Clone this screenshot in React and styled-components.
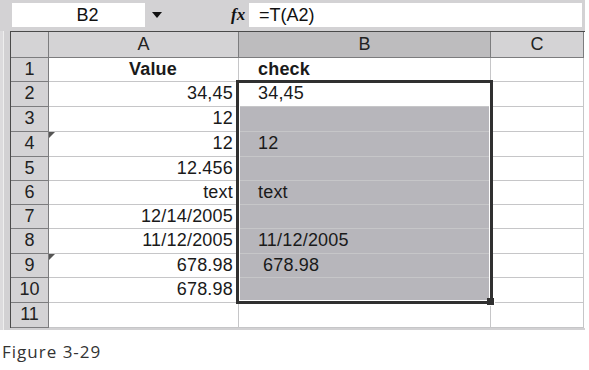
import React from "react";
import styled, { createGlobalStyle } from "styled-components";

const Global = createGlobalStyle`
  html, body { margin: 0; padding: 0; background: #ffffff; }
  body { font-family: "Liberation Sans", Arial, sans-serif; }
`;

const Page = styled.div`
  width: 589px;
  height: 370px;
  position: relative;
  overflow: hidden;
`;

const Window = styled.div`
  width: 585px;
  height: 330px;
  background: #d2d1d3;
  display: flex;
  flex-direction: column;
`;

const Toolbar = styled.div`
  height: 31px;
  box-sizing: border-box;
  padding: 3px 3px 4px 12px;
  display: flex;
  align-items: stretch;
  background: #d3d2d4;
`;

const NameBox = styled.div`
  width: 133px;
  background: #fff;
  font-size: 18px;
  color: #111;
  display: flex;
  align-items: center;
  justify-content: center;
  padding-left: 18px;
  box-sizing: border-box;
`;

const Drop = styled.div`
  width: 86px;
  display: flex;
  align-items: center;
  padding-left: 7px;
  box-sizing: border-box;
`;

const Fx = styled.div`
  width: 18px;
  font-family: "Liberation Serif", serif;
  font-style: italic;
  font-weight: bold;
  font-size: 17px;
  color: #111;
  display: flex;
  align-items: center;
`;

const Formula = styled.div`
  flex: 1;
  background: #fff;
  font-size: 18px;
  color: #111;
  display: flex;
  align-items: center;
  padding-left: 10px;
`;

const Body = styled.div`
  display: flex;
  flex: 1;
`;

const LeftStrip = styled.div`
  width: 10px;
  background: linear-gradient(to right, #dcdbdd 0 3px, #eeeeee 3px 4px, #d2d1d3 4px);
`;

const SheetWrap = styled.div`
  position: relative;
  width: 574px;
  align-self: flex-start;
  border-left: 1px solid #4a4a4a;
  border-top: 1px solid #4a4a4a;
  background: #fff;
`;

const Sheet = styled.div`
  display: grid;
  grid-template-columns: 38px 190px 252px 93px;
  grid-template-rows: 26px 24px 25px 25px 25px 24px 24px 24px 25px 24px 25px 25px;
`;

const Cell = styled.div`
  box-sizing: border-box;
  position: relative;
  border-right: 1px solid #c6c6c8;
  border-bottom: 1px solid #c6c6c8;
  font-size: 18px;
  color: #1a1a1a;
  display: flex;
  align-items: center;
  white-space: nowrap;
  background: ${(p) => (p.$sel ? "#b7b6bb" : "#fff")};
  justify-content: ${(p) => (p.$align === "right" ? "flex-end" : p.$align === "center" ? "center" : "flex-start")};
  padding: ${(p) => (p.$align === "right" ? "0 5px 1px 0" : `0 0 1px ${p.$indent ?? 19}px`)};
  font-weight: ${(p) => (p.$bold ? "bold" : "normal")};
  letter-spacing: 0.2px;
`;

const Head = styled.div`
  box-sizing: border-box;
  border-right: 1px solid #7c7c7e;
  border-bottom: 1px solid #7c7c7e;
  background: ${(p) => (p.$active ? "#bdbcbe" : "#d4d3d5")};
  font-size: 18px;
  color: #222;
  display: flex;
  align-items: center;
  justify-content: center;
  padding-bottom: 1px;
`;

const ErrorMark = styled.span`
  position: absolute;
  left: 0;
  top: 0;
  width: 0;
  height: 0;
  border-top: 6px solid #555;
  border-right: 6px solid transparent;
`;

const Selection = styled.div`
  position: absolute;
  left: 225px;
  top: 48px;
  width: 257px;
  height: 224px;
  box-sizing: border-box;
  border: 3px solid #303030;
  box-shadow: inset 0 0 0 1px #ffffff;
  pointer-events: none;
`;

const Handle = styled.div`
  position: absolute;
  left: 476px;
  top: 266px;
  width: 7px;
  height: 7px;
  background: #303030;
  border: 1px solid #fff;
  border-top: none;
  border-left: none;
`;

const Caption = styled.div`
  font-family: "Open Sans", "Noto Sans", sans-serif;
  font-size: 17px;
  letter-spacing: 1px;
  color: #333;
  margin: 10px 0 0 2px;
`;

const rows = [
  { a: "Value", b: "check", bold: true },
  { a: "34,45", b: "34,45" },
  { a: "12", b: "" },
  { a: "12", b: "12", err: true },
  { a: "12.456", b: "" },
  { a: "text", b: "text" },
  { a: "12/14/2005", b: "" },
  { a: "11/12/2005", b: "11/12/2005" },
  { a: "678.98", b: "678.98", err: true, indent: 24 },
  { a: "678.98", b: "" },
  { a: "", b: "" },
];

export default function App() {
  return (
    <Page>
      <Global />
      <Window>
        <Toolbar>
          <NameBox>B2</NameBox>
          <Drop>
            <svg width="10" height="6" viewBox="0 0 10 6">
              <path d="M0 0 H10 L5 6 Z" fill="#111" />
            </svg>
          </Drop>
          <Fx>fx</Fx>
          <Formula>=T(A2)</Formula>
        </Toolbar>
        <Body>
          <LeftStrip />
          <SheetWrap>
            <Sheet>
              <Head />
              <Head>A</Head>
              <Head $active>B</Head>
              <Head>C</Head>
              {rows.map((r, i) => {
                const n = i + 1;
                const sel = n >= 3 && n <= 10;
                return (
                  <React.Fragment key={n}>
                    <Head>{n}</Head>
                    {n === 1 ? (
                      <Cell $align="center" $bold>{r.a}</Cell>
                    ) : (
                      <Cell $align="right">
                        {r.err && <ErrorMark />}
                        {r.a}
                      </Cell>
                    )}
                    <Cell $sel={sel} $bold={r.bold} $indent={r.indent}>{r.b}</Cell>
                    <Cell />
                  </React.Fragment>
                );
              })}
            </Sheet>
            <Selection />
            <Handle />
          </SheetWrap>
        </Body>
      </Window>
      <Caption>Figure 3-29</Caption>
    </Page>
  );
}
